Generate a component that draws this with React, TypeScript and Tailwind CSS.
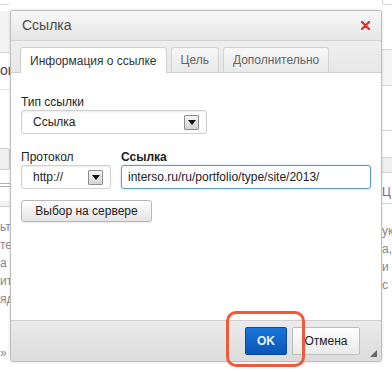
import React from 'react';

const font = "font-['Liberation_Sans',Arial,sans-serif]";

const SelectArrow = () => (
  <span className="flex h-[15px] w-[15px] items-center justify-center rounded-[1px] border border-[#8e8e8e] bg-gradient-to-b from-[#f5f5f5] to-[#d4d4d4]">
    <svg width="8" height="5" viewBox="0 0 8 5">
      <path d="M0 0h8L4 5z" fill="#111" />
    </svg>
  </span>
);

const Tab: React.FC<{ label: string; active?: boolean }> = ({ label, active }) => (
  <div
    className={`flex h-[25px] items-center rounded-t-[3px] border border-b-0 px-[9px] text-[12px] ${
      active
        ? 'relative -mb-px h-[26px] border-[#cfcfcf] bg-white text-[#333]'
        : 'border-[#d2d2d2] bg-gradient-to-b from-[#f7f7f7] to-[#e9e9e9] text-[#666]'
    }`}
  >
    {label}
  </div>
);

const LinkDialog: React.FC = () => (
  <div className="absolute left-[10px] top-[10px] flex h-[352px] w-[372px] flex-col overflow-hidden rounded-[3px] border border-[#bdbdbd] bg-[#ececec] shadow-[0_0_3px_rgba(0,0,0,0.15)]">
    {/* title */}
    <div className="flex h-[30px] shrink-0 items-center justify-between border-b border-[#d2d2d2] bg-gradient-to-b from-[#f8f8f8] to-[#e6e6e6] pl-[11px] pr-[11px]">
      <span className="text-[14px] text-[#4a4a4a]">Ссылка</span>
      <svg width="9" height="9" viewBox="0 0 9 9">
        <path d="M1 1l7 7M8 1L1 8" stroke="#e0312b" strokeWidth="2.4" strokeLinecap="round" />
      </svg>
    </div>

    {/* tabs */}
    <div className="flex h-[31px] shrink-0 items-end gap-[4px] bg-gradient-to-b from-[#eeeeee] to-[#e8e8e8] pl-[9px]">
      <Tab label="Информация о ссылке" active />
      <Tab label="Цель" />
      <Tab label="Дополнительно" />
    </div>

    {/* body */}
    <div className="flex flex-1 flex-col border-t border-b border-[#cfcfcf] bg-white pl-[10px] pr-[10px] pt-[22px] text-[12px] text-[#222]">
      <div className="h-[15px] leading-[15px]">Тип ссылки</div>
      <div className="flex h-[24px] w-[186px] items-center justify-between rounded-[3px] border border-[#d0d0d0] pl-[11px] pr-[7px] shadow-[inset_0_1px_2px_rgba(0,0,0,0.08)]">
        <span>Ссылка</span>
        <SelectArrow />
      </div>

      <div className="mt-[16px] flex gap-[10px]">
        <div className="flex w-[90px] flex-col">
          <div className="h-[15px] leading-[15px]">Протокол</div>
          <div className="flex h-[24px] items-center justify-between rounded-[3px] border border-[#d0d0d0] pl-[11px] pr-[7px] shadow-[inset_0_1px_2px_rgba(0,0,0,0.08)]">
            <span>http://</span>
            <SelectArrow />
          </div>
        </div>
        <div className="flex flex-1 flex-col">
          <div className="h-[15px] font-bold leading-[15px]">Ссылка</div>
          <div className="flex h-[24px] w-[250px] items-center rounded-[3px] border border-[#5b9bd1] pl-[6px] shadow-[0_0_2px_rgba(80,150,210,0.5)]">
            interso.ru/ru/portfolio/type/site/2013/
          </div>
        </div>
      </div>

      <div className="mt-[11px] flex h-[22px] w-[131px] items-center justify-center rounded-[3px] border border-[#b8b8b8] bg-gradient-to-b from-[#ffffff] to-[#e4e4e4] text-[12px] text-[#222] shadow-[0_1px_1px_rgba(0,0,0,0.08)]">
        Выбор на сервере
      </div>
    </div>

    {/* footer */}
    <div className="relative flex h-[40px] shrink-0 items-center justify-end gap-[5px] bg-gradient-to-b from-[#ebebeb] to-[#dcdcdc] pr-[21px]">
      <div className="flex h-[28px] w-[42px] items-center justify-center rounded-[2px] border border-[#0a4a9c] bg-gradient-to-b from-[#1a75d8] to-[#0b56b8] text-[12px] font-bold text-[#e8f4ff]">
        OK
      </div>
      <div className="flex h-[28px] w-[68px] items-center justify-center rounded-[2px] border border-[#bdbdbd] bg-gradient-to-b from-[#ffffff] to-[#eaeaea] text-[12px] text-[#222]">
        Отмена
      </div>
      <svg className="absolute bottom-[4px] right-[4px]" width="7" height="7" viewBox="0 0 7 7">
        <path d="M7 0v7H0z" fill="#666" />
      </svg>
    </div>
  </div>
);

export default function App() {
  return (
    <div className={`relative h-[372px] w-[392px] overflow-hidden bg-white ${font}`}>
      {/* page behind the dialog */}
      <div className="flex h-full">
        <div className="flex w-[10px] flex-col text-[12px] text-[#888]">
          <div className="h-[5px] rounded-br-[3px] border-b border-[#d6d6d6]" />
          <div className="mt-[6px] h-[41px] bg-[#f4f4f4]" />
          <div className="h-px bg-[#d8d8d8]" />
          <div className="mt-[10px] h-[14px] overflow-hidden whitespace-nowrap text-[14px] leading-[14px] text-[#444]">оц</div>
          <div className="mt-[12px] h-px bg-[#e4e4e4]" />
          <div className="mt-[58px] h-[22px] rounded-r-[3px] border border-l-0 border-[#cfcfcf] bg-[#f0f0f0]" />
          <div className="mt-[13px] h-[4px] border-y border-[#b0b0b0]" />
          <div className="mt-[14px] h-[6px] border-b border-[#d0d0d0] bg-[#f2f2f2]" />
          <div className="mt-[13px] flex flex-col gap-[4px] overflow-hidden whitespace-nowrap leading-[14px]">
            <span>ьт</span>
            <span>те</span>
            <span>а</span>
            <span>ит</span>
            <span>яд</span>
          </div>
          <div className="mt-[40px] leading-[14px]">»</div>
        </div>
        <div className="flex-1" />
        <div className="flex w-[10px] flex-col text-[12px] text-[#888]">
          <div className="h-[5px] rounded-bl-[3px] border-b border-l border-[#d6d6d6]" />
          <div className="mt-[44px] h-px bg-[#d8d8d8]" />
          <div className="h-[35px] bg-[#f5f5f5]" />
          <div className="h-px bg-[#d6d6d6]" />
          <div className="mt-[44px] h-px bg-[#d8d8d8]" />
          <div className="mt-[26px] h-[16px] border-y border-[#d4d4d4] bg-[#f0f0f0]" />
          <div className="mt-[12px] leading-[14px] text-[#8a5a9a]">Ц</div>
          <div className="mt-[4px] h-px bg-[#d8d8d8]" />
          <div className="mt-[20px] flex flex-col gap-[4px] overflow-hidden whitespace-nowrap leading-[14px]">
            <span>ук</span>
            <span>а,</span>
            <span>и</span>
            <span>с</span>
          </div>
        </div>
      </div>

      <LinkDialog />

      {/* highlight around OK */}
      <div className="absolute left-[226px] top-[311px] h-[56px] w-[79px] rounded-[10px] border-[3px] border-[#ef5a3a]" />
    </div>
  );
}
